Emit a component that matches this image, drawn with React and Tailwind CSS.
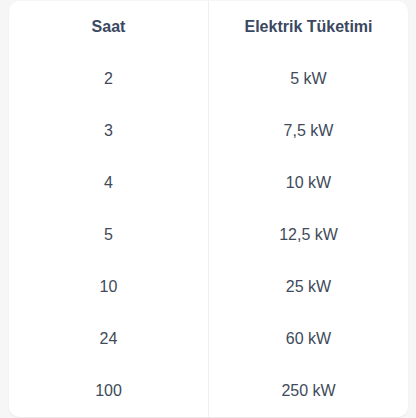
const rows = [
  ['2', '5 kW'],
  ['3', '7,5 kW'],
  ['4', '10 kW'],
  ['5', '12,5 kW'],
  ['10', '25 kW'],
  ['24', '60 kW'],
  ['100', '250 kW'],
];

export default function App() {
  return (
    <div className="min-h-screen bg-[#f6f6f6] pl-[9px] pr-[8px] pt-px" style={{ fontFamily: '"Liberation Sans", Arial, sans-serif' }}>
      <div className="bg-white rounded-[10px] shadow-[0_1px_2px_rgba(0,0,0,0.06)] overflow-hidden">
        <table className="w-full border-collapse text-[16px]">
          <thead>
            <tr className="h-[52px]">
              <th className="w-1/2 font-bold text-[#3b4861] border-r border-[#efefef]">Saat</th>
              <th className="w-1/2 font-bold text-[#3b4861]">Elektrik Tüketimi</th>
            </tr>
          </thead>
          <tbody>
            {rows.map(([h, kw]) => (
              <tr key={h} className="h-[52px]">
                <td className="text-center text-[#404a5a] border-r border-[#efefef]">{h}</td>
                <td className="text-center text-[#404a5a]">{kw}</td>
              </tr>
            ))}
          </tbody>
        </table>
      </div>
    </div>
  );
}
